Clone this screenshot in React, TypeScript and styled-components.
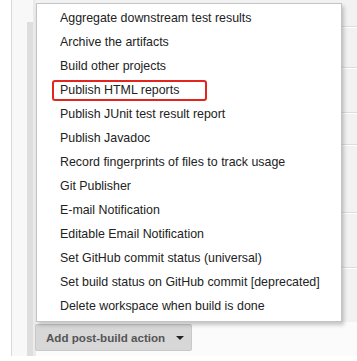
import styled, { createGlobalStyle } from "styled-components";

const GlobalStyle = createGlobalStyle`
  html, body {
    margin: 0;
    padding: 0;
    background: #ffffff;
    font-family: "Liberation Sans", Arial, sans-serif;
  }
`;

const Page = styled.div`
  width: 357px;
  height: 361px;
  overflow: hidden;
  padding-left: 11px;
  box-sizing: border-box;
  background: #ffffff;
`;

const Rail = styled.div`
  height: 356px;
  border-left: 1px solid #d9d9d9;
  background: #f8f8f8;
  padding-left: 15px;
  display: flex;
`;

const Section = styled.div`
  flex: 1;
  display: flex;
  flex-direction: column;
  border-left: 6px solid #dedede;
  margin-top: 22px;
`;

const Body = styled.div`
  flex: 1;
  display: flex;
  flex-direction: column;
  border-left: 3px solid #ebebeb;
  margin-top: -22px;
`;

const Rows = styled.div`
  height: 322px;
  display: flex;
  flex-direction: column;
  background: #f2f2f2;
`;

const Row = styled.div<{ $h: number }>`
  height: ${(p) => p.$h}px;
  flex-shrink: 0;
  border-bottom: 1px solid #dcdcdc;
  box-shadow: 0 1px 0 #ffffff;
`;

const Footer = styled.div`
  flex: 1;
  background: #fbfbfb;
  padding-top: 2px;
`;

const ButtonWrap = styled.div`
  position: relative;
  display: inline-block;
  margin-left: -1px;
`;

const AddButton = styled.button`
  display: flex;
  align-items: center;
  gap: 11px;
  height: 27px;
  padding: 0 7px 0 10px;
  border: 1px solid #c9c9c9;
  border-radius: 2px;
  background: #d7d7d7;
  color: #555555;
  font-family: "Liberation Sans", Arial, sans-serif;
  font-size: 11.6px;
  font-weight: bold;
  cursor: pointer;
`;

const Caret = styled.span`
  width: 0;
  height: 0;
  border-left: 4px solid transparent;
  border-right: 4px solid transparent;
  border-top: 4px solid #222222;
`;

const Menu = styled.ul`
  position: absolute;
  left: 1px;
  bottom: calc(100% + 2px);
  width: 306px;
  margin: 0;
  padding: 2px 0 3px;
  list-style: none;
  background: #ffffff;
  border: 1px solid #c4c4c4;
  box-shadow: 2px 3px 4px rgba(0, 0, 0, 0.22);
  box-sizing: border-box;
`;

const Item = styled.li`
  height: 24px;
  line-height: 24px;
  padding-left: 23px;
  font-size: 12.4px;
  color: #222222;
  white-space: nowrap;
`;

const Highlight = styled.span`
  display: inline-block;
  height: 17px;
  line-height: 17px;
  margin-left: -8px;
  padding: 0 26px 0 6px;
  border: 2px solid #e3241f;
  border-radius: 3px;
`;

const items = [
  "Aggregate downstream test results",
  "Archive the artifacts",
  "Build other projects",
  "Publish HTML reports",
  "Publish JUnit test result report",
  "Publish Javadoc",
  "Record fingerprints of files to track usage",
  "Git Publisher",
  "E-mail Notification",
  "Editable Email Notification",
  "Set GitHub commit status (universal)",
  "Set build status on GitHub commit [deprecated]",
  "Delete workspace when build is done",
];

const rowHeights = [26, 40, 44, 31, 67, 54];

const App = () => {
  return (
    <Page>
      <GlobalStyle />
      <Rail>
        <Section>
          <Body>
            <Rows>
              {rowHeights.map((h, i) => (
                <Row key={i} $h={h} />
              ))}
            </Rows>
            <Footer>
              <ButtonWrap>
                <Menu>
                  {items.map((label) => (
                    <Item key={label}>
                      {label === "Publish HTML reports" ? <Highlight>{label}</Highlight> : label}
                    </Item>
                  ))}
                </Menu>
                <AddButton>
                  Add post-build action
                  <Caret />
                </AddButton>
              </ButtonWrap>
            </Footer>
          </Body>
        </Section>
      </Rail>
    </Page>
  );
};

export default App;
